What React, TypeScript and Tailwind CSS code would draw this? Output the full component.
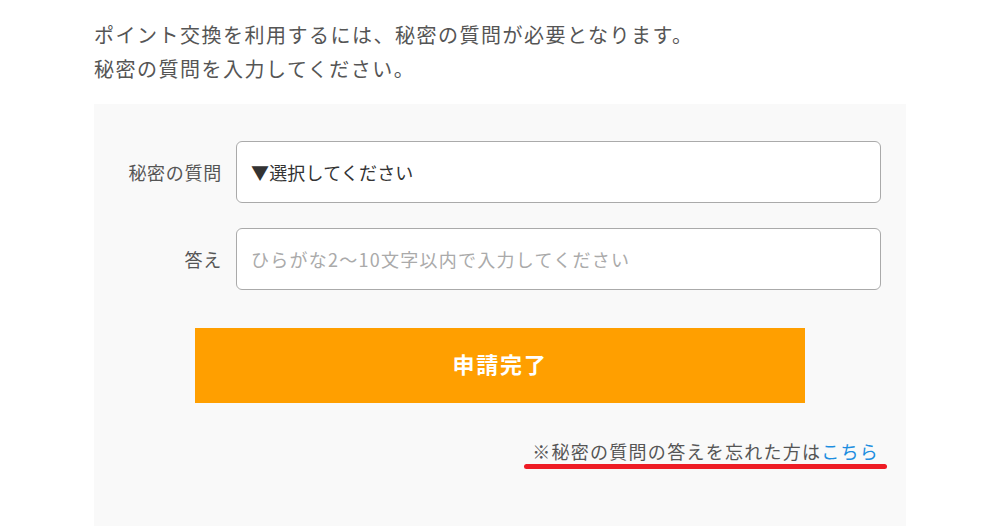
export default function App() {
  const font = { fontFamily: '"Noto Sans CJK JP", "Noto Sans", sans-serif' };

  return (
    <div className="w-[983px] h-[526px] overflow-hidden bg-white" style={font}>
      <div className="ml-[94px] w-[812px]">
        <div className="pt-[18px] text-[20px] leading-[34px] tracking-[0.075em] text-[#555]">
          <p>ポイント交換を利用するには、秘密の質問が必要となります。</p>
          <p>秘密の質問を入力してください。</p>
        </div>

        <div className="mt-[18px] bg-[#f9f9f9] pt-[37px] pb-[60px]">
          <div className="flex items-center">
            <label className="w-[142px] pr-[14px] text-right text-[18px] tracking-[0.04em] text-[#555]">秘密の質問</label>
            <div className="w-[645px] h-[62px] flex items-center rounded-[6px] border border-[#aaa] bg-white pl-[14px] text-[18px] tracking-[0.01em] text-[#333]">
              ▼選択してください
            </div>
          </div>

          <div className="mt-[25px] flex items-center">
            <label className="w-[142px] pr-[14px] text-right text-[18px] tracking-[0.04em] text-[#555]">答え</label>
            <input
              placeholder="ひらがな2～10文字以内で入力してください"
              className="w-[645px] h-[62px] rounded-[6px] border border-[#aaa] bg-white pl-[14px] text-[18px] tracking-[0.07em] text-[#333] placeholder:text-[#aaa] outline-none"
            />
          </div>

          <div className="mt-[38px] flex justify-center">
            <button className="w-[610px] h-[75px] bg-[#ff9f00] pb-[4px] text-white text-[22px] font-bold tracking-[0.08em]">
              申請完了
            </button>
          </div>

          <div className="mt-[36px] flex justify-end pr-[19px]">
            <div className="flex flex-col items-stretch">
              <p className="px-[8px] text-[18px] leading-[24px] tracking-[0.07em] text-[#555]">
                ※秘密の質問の答えを忘れた方は<a className="text-[#1d8ee0]">こちら</a>
              </p>
              <div className="mt-[1px] h-[5px] rounded-full bg-[#ee1c25]" />
            </div>
          </div>
        </div>
      </div>
    </div>
  );
}
